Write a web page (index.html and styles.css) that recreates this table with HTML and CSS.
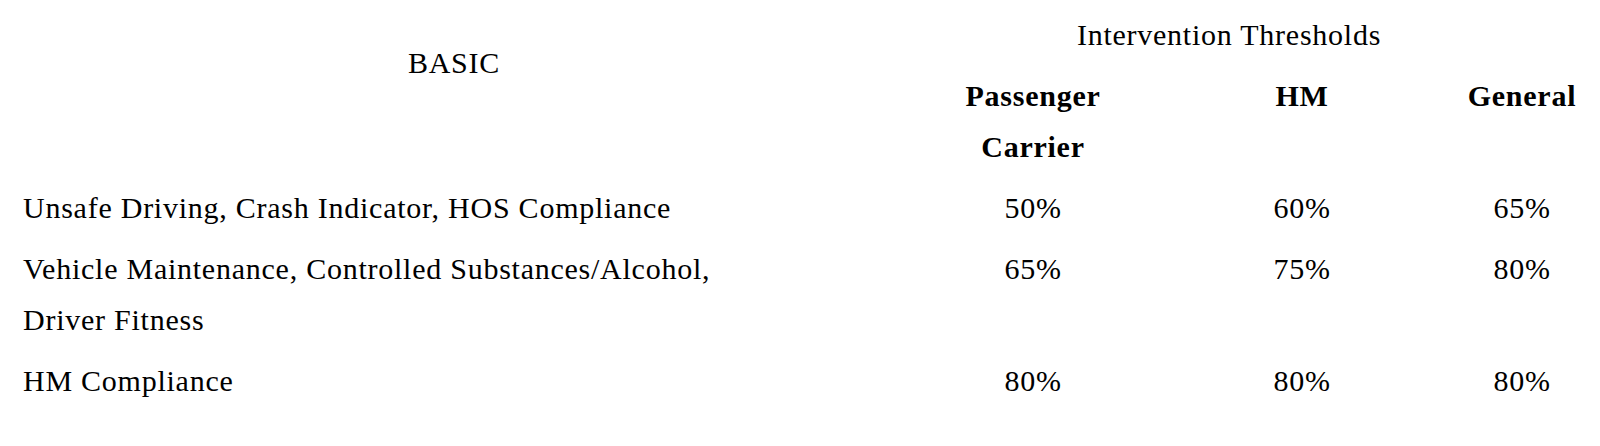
FILE: index.html
```html
<!DOCTYPE html>
<html lang="en">
<head>
<meta charset="utf-8">
<title>Intervention Thresholds</title>
<link rel="stylesheet" href="styles.css">
</head>
<body>
<table class="thresholds">
  <colgroup>
    <col class="col-basic">
    <col class="col-pass">
    <col class="col-hm">
    <col class="col-gen">
  </colgroup>
  <thead>
    <tr>
      <th class="basic" rowspan="2">BASIC</th>
      <th class="group" colspan="3">Intervention Thresholds</th>
    </tr>
    <tr>
      <th class="sub">Passenger<br>Carrier</th>
      <th class="sub">HM</th>
      <th class="sub last">General</th>
    </tr>
  </thead>
  <tbody>
    <tr>
      <td class="name">Unsafe Driving, Crash Indicator, HOS Compliance</td>
      <td class="pct">50%</td>
      <td class="pct">60%</td>
      <td class="pct last">65%</td>
    </tr>
    <tr>
      <td class="name">Vehicle Maintenance, Controlled Substances/Alcohol,<br>Driver Fitness</td>
      <td class="pct">65%</td>
      <td class="pct">75%</td>
      <td class="pct last">80%</td>
    </tr>
    <tr>
      <td class="name">HM Compliance</td>
      <td class="pct">80%</td>
      <td class="pct">80%</td>
      <td class="pct last">80%</td>
    </tr>
  </tbody>
</table>
</body>
</html>
```
FILE: styles.css
```css
html, body {
  margin: 0;
  padding: 0;
  background: #ffffff;
  overflow: hidden;
}

body {
  font-family: "Liberation Serif", "Times New Roman", serif;
  font-size: 30px;
  line-height: 51px;
  letter-spacing: 0.75px;
  color: #000000;
}

.thresholds {
  border-collapse: collapse;
  table-layout: fixed;
  width: 1586px;
  margin: 4px 0 0 13px;
}

.col-basic { width: 882px; }
.col-pass { width: 276px; }
.col-hm { width: 262px; }
.col-gen { width: 166px; }

.thresholds th,
.thresholds td {
  padding: 5px 10px;
  vertical-align: top;
}

.thresholds .basic {
  font-weight: normal;
  text-align: center;
  padding-top: 33px;
}

.thresholds .group {
  font-weight: normal;
  text-align: center;
  padding-right: 46px;
}

.thresholds .sub {
  font-weight: bold;
  text-align: center;
}

.thresholds .name {
  text-align: left;
}

.thresholds .pct {
  text-align: center;
}

.thresholds .last {
  padding-left: 16px;
  padding-right: 4px;
}
```
